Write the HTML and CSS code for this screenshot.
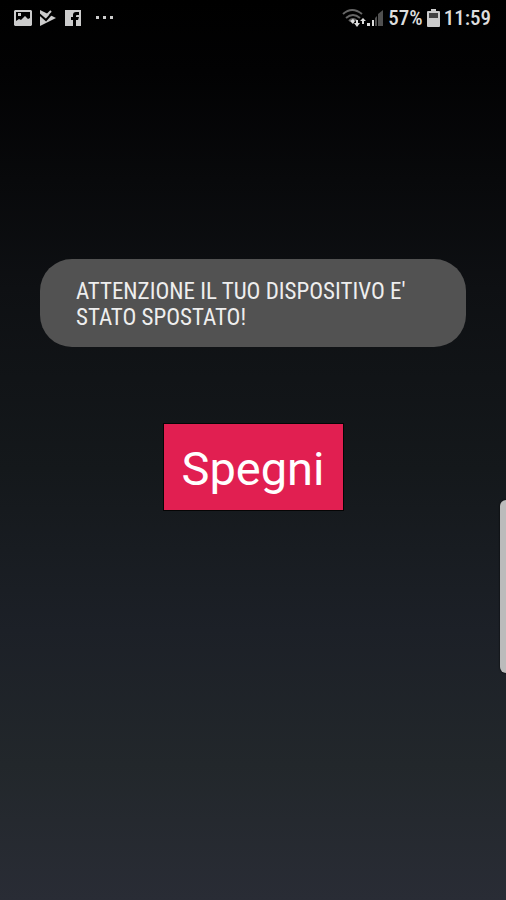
FILE: index.html
```html
<!DOCTYPE html>
<html lang="it">
<head>
<meta charset="utf-8">
<meta name="viewport" content="width=device-width, initial-scale=1">
<title>Allarme</title>
<link rel="stylesheet" href="styles.css">
</head>
<body>
<header class="status">
  <div class="notifications">
    <svg width="18" height="18" viewBox="0 0 18 18" aria-hidden="true"><path fill="currentColor" fill-rule="evenodd" d="M1 1h16l1 1v14l-1 1H1l-1-1V2zM2 3v9l3-2 2 1 4-4 3 3 2-1V3zM4 4h3v3H4z"/></svg>
    <svg width="18" height="18" viewBox="0 0 18 18" aria-hidden="true"><path fill="currentColor" d="M1 1l16 8L1 17z"/><path d="M0 5l7 6 8-9" fill="none" stroke="#000" stroke-width="2"/><path d="M4 4l3 3 5-5" fill="none" stroke="currentColor" stroke-width="2"/></svg>
    <svg width="18" height="18" viewBox="0 0 18 18" aria-hidden="true"><path fill="currentColor" d="M1 1h16v16H1z"/><path fill="#000" d="M9 17v-6H7V8h2V6q0-3 3-3h3v3h-2q-1 0-1 1v1h3l-1 3h-2v6z"/></svg>
    <svg class="more" width="18" height="18" viewBox="0 0 18 18" aria-hidden="true"><path fill="currentColor" d="M0 7h3v3H0zm7 0h3v3H7zm7 0h3v3h-3z"/></svg>
  </div>
  <div class="system">
    <svg width="24" height="20" viewBox="0 0 24 20" aria-hidden="true"><g fill="none" stroke="#666" stroke-width="2"><path d="M1 6q9-8 19 0M4 10q7-6 14 0M7 13q4-4 8 0"/></g><path fill="#ddd" d="M8 13l3-2 2 2-2 3zm4 2h2v-3h2v3h2l-3 4zm6-2l3-3 3 3h-2v3h-2v-3z"/></svg>
    <svg width="18" height="18" viewBox="0 0 18 18" aria-hidden="true"><path fill="#ddd" d="M1 14h3v3H1zm5-3h2v6H6z"/><path fill="#505050" d="M9 9l2-2v10H9zm3-4l5-4v16h-5z"/></svg>
    <span class="level">57%</span>
    <svg width="13" height="20" viewBox="0 0 13 20" aria-hidden="true"><path fill="#ccc" d="M4 1h5v2h3q1 0 1 1v14q0 1-1 1H1q-1 0-1-1V4q0-1 1-1h3z"/><path fill="#444" d="M2 5h9v5H2z"/></svg>
    <time>11:59</time>
  </div>
</header>
<main class="alarm">
  <p class="toast" role="alert">ATTENZIONE IL TUO DISPOSITIVO E' STATO SPOSTATO!</p>
  <button class="stop" type="button">Spegni</button>
</main>
<div class="edge"></div>
</body>
</html>
```
FILE: styles.css
```css
* { box-sizing: border-box; }
body {
  margin: 0;
  min-height: 100vh;
  background: linear-gradient(#000 0%, #020203 8%, #0e1013 32%, #14181b 52%, #1c2027 70%, #22272b 85%, #292c35 100%);
  color: #ddd;
  font-family: "Roboto Condensed", Roboto, sans-serif;
}
.status {
  display: flex;
  justify-content: space-between;
  align-items: center;
  height: 36px;
  padding: 0 15px 0 14px;
  font-size: 21px;
  font-weight: 500;
}
.notifications { display: flex; gap: 7px; color: #ccc; }
.more { margin-left: 7px; }
.system { display: flex; align-items: center; gap: 4px; }
.system svg:first-child { margin-right: -4px; }
.alarm {
  display: flex;
  flex-direction: column;
  align-items: center;
  gap: 77px;
  padding: 223px 40px 40px;
}
.toast {
  width: 100%;
  margin: 0;
  padding: 20px 36px 16px;
  border-radius: 32px;
  background: #525252;
  color: #eee;
  font-size: 23px;
  line-height: 26px;
}
.stop {
  padding: 17px 18px 13px;
  border: 0;
  outline: 1px solid #050505;
  background: #e11f51;
  color: #fff;
  font-family: Roboto, sans-serif;
  font-size: 47px;
  line-height: 56px;
}
.edge {
  position: fixed;
  right: 0;
  top: 55.5%;
  width: 6px;
  height: 173px;
  border-radius: 6px 0 0 6px;
  background: #bbb;
  box-shadow: 0 0 2px #000;
}
```
